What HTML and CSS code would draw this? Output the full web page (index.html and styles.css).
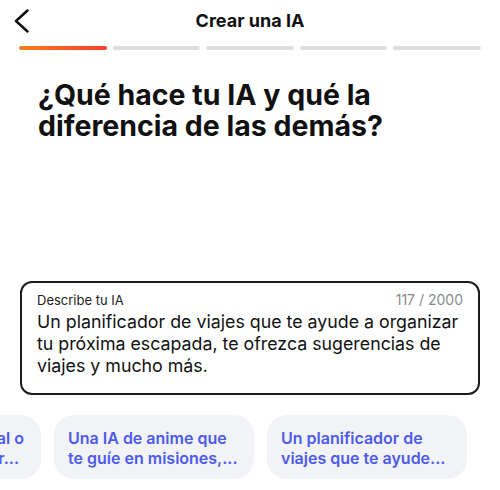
FILE: index.html
```html
<!DOCTYPE html>
<html lang="es">
<head>
<meta charset="utf-8">
<link rel="stylesheet" href="styles.css">
</head>
<body>
<div class="screen">
  <header class="topbar">
    <button class="back" aria-label="Atrás">
      <svg width="16" height="24" viewBox="0 0 16 24"><polyline points="13.5,1.5 2,12 13.5,22.5" fill="none" stroke="#111" stroke-width="2.5" stroke-linecap="round" stroke-linejoin="round"/></svg>
    </button>
    <h1 class="title">Crear una IA</h1>
  </header>
  <div class="progress">
    <span class="seg active"></span>
    <span class="seg"></span>
    <span class="seg"></span>
    <span class="seg"></span>
    <span class="seg"></span>
  </div>
  <h2 class="question">¿Qué hace tu IA y qué la diferencia de las demás?</h2>
  <div class="field">
    <div class="field-head">
      <span class="label">Describe tu IA</span>
      <span class="count">117 / 2000</span>
    </div>
    <p class="value">Un planificador de viajes que te ayude a organizar tu próxima escapada, te ofrezca sugerencias de viajes y mucho más.</p>
  </div>
  <div class="chips">
    <div class="chip chip-edge">Un mentor personal o<br><span class="tail">un tutor...</span></div>
    <div class="chip">Una IA de anime que<br>te guíe en misiones,...</div>
    <div class="chip">Un planificador de<br>viajes que te ayude...</div>
  </div>
</div>
</body>
</html>
```

FILE: styles.css
```css
* { box-sizing: border-box; }
html, body { margin: 0; padding: 0; background: #fff; }
body {
  font-family: Inter, "Noto Sans", Roboto, sans-serif;
  color: #111;
  width: 500px;
  height: 490px;
  overflow: hidden;
}
.screen { display: flex; flex-direction: column; }
.topbar {
  position: relative;
  height: 40px;
  display: flex;
  align-items: center;
  justify-content: center;
}
.back {
  position: absolute;
  left: 14px;
  top: 9px;
  padding: 0;
  border: 0;
  background: none;
  width: 16px;
  height: 24px;
}
.back svg { display: block; }
.title {
  margin: 0;
  font-size: 18px;
  font-weight: 700;
  color: #111;
}
.progress {
  display: flex;
  gap: 6px;
  padding: 6px 19px 0;
}
.seg {
  flex: 1;
  height: 4px;
  border-radius: 2px;
  background: #dcdee3;
}
.seg.active { background: linear-gradient(90deg, #ff7d16, #f4412e); }
.question {
  margin: 29px 38px 0;
  font-size: 28.5px;
  line-height: 31px;
  font-weight: 700;
  color: #111;
}
.field {
  margin: 140px 20px 0;
  border: 2px solid #1c1c1c;
  border-radius: 12px;
  padding: 8px 15px 16px;
}
.field-head {
  display: flex;
  justify-content: space-between;
  align-items: baseline;
  font-size: 13px;
  line-height: 18px;
}
.label { color: #222; }
.count { color: #8a8a8e; font-size: 14px; }
.value {
  margin: 2px 0 0;
  font-size: 17.8px;
  line-height: 22px;
  color: #111;
}
.chips {
  display: flex;
  gap: 13px;
  margin: 20px 0 0 -159px;
}
.chip {
  flex: 0 0 200px;
  height: 64px;
  border-radius: 20px;
  background: #f2f3f6;
  padding: 13px 14px 11px;
  color: #4d5aea;
  font-size: 16px;
  line-height: 20px;
  font-weight: 600;
  white-space: nowrap;
  overflow: hidden;
}
.chip-edge { text-align: right; padding-right: 17px; }
.chip-edge .tail { margin-right: 5px; }
```
